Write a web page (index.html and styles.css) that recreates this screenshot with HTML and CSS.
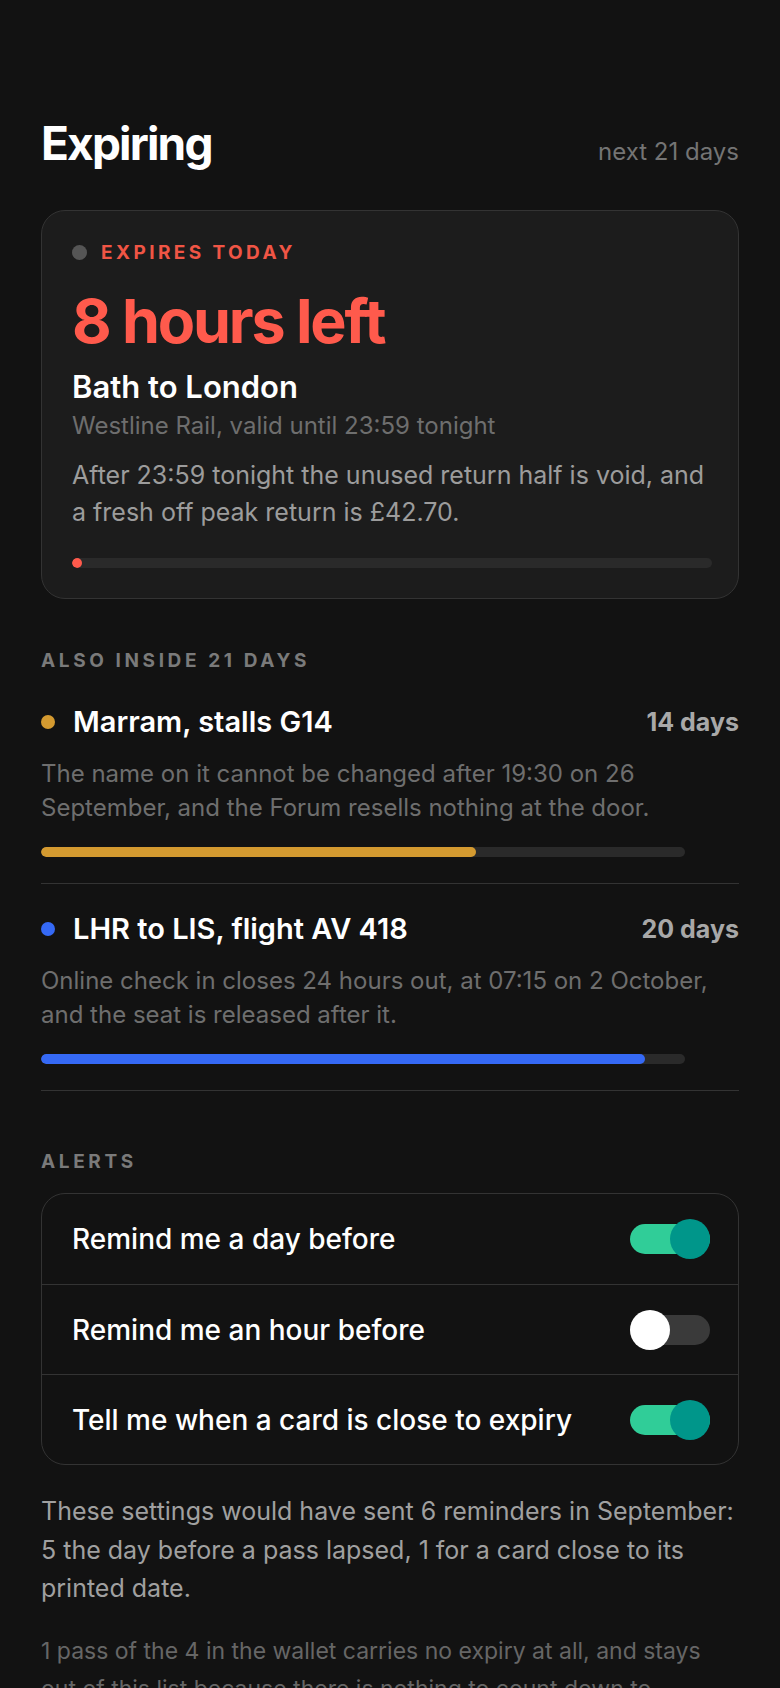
FILE: index.html
```html
<!DOCTYPE html>
<html lang="en">
<head>
<meta charset="utf-8">
<title>Expiring</title>
<link rel="stylesheet" href="styles.css">
</head>
<body>
<main class="page">
  <header class="head">
    <h1 class="title">Expiring</h1>
    <span class="range">next 21 days</span>
  </header>

  <section class="hero">
    <div class="hero-tag"><span class="tag-dot"></span><span class="tag-text">EXPIRES TODAY</span></div>
    <div class="hero-count">8 hours left</div>
    <div class="hero-name">Bath to London</div>
    <div class="hero-sub">Westline Rail, valid until 23:59 tonight</div>
    <p class="hero-body">After 23:59 tonight the unused return half is void, and a fresh off peak return is £42.70.</p>
    <div class="track hero-track"><div class="fill fill-red" style="width:1.5%"></div></div>
  </section>

  <h2 class="label">ALSO INSIDE 21 DAYS</h2>

  <div class="item">
    <div class="item-head">
      <span class="dot dot-gold"></span>
      <span class="item-name">Marram, stalls G14</span>
      <span class="item-days">14 days</span>
    </div>
    <p class="item-body">The name on it cannot be changed after 19:30 on 26 September, and the Forum resells nothing at the door.</p>
    <div class="track item-track"><div class="fill fill-gold" style="width:67.5%"></div></div>
  </div>

  <div class="item">
    <div class="item-head">
      <span class="dot dot-blue"></span>
      <span class="item-name">LHR to LIS, flight AV 418</span>
      <span class="item-days">20 days</span>
    </div>
    <p class="item-body">Online check in closes 24 hours out, at 07:15 on 2 October, and the seat is released after it.</p>
    <div class="track item-track"><div class="fill fill-blue" style="width:93.8%"></div></div>
  </div>

  <h2 class="label label-alerts">ALERTS</h2>

  <div class="alerts">
    <div class="alert-row">
      <span class="alert-text">Remind me a day before</span>
      <span class="toggle on"><span class="knob"></span></span>
    </div>
    <div class="alert-row">
      <span class="alert-text">Remind me an hour before</span>
      <span class="toggle off"><span class="knob"></span></span>
    </div>
    <div class="alert-row">
      <span class="alert-text">Tell me when a card is close to expiry</span>
      <span class="toggle on"><span class="knob"></span></span>
    </div>
  </div>

  <p class="summary">These settings would have sent 6 reminders in September: 5 the day before a pass lapsed, 1 for a card close to its printed date.</p>
  <p class="footnote">1 pass of the 4 in the wallet carries no expiry at all, and stays out of this list because there is nothing to count down to.</p>
</main>
</body>
</html>
```

FILE: styles.css
```css
* { box-sizing: border-box; }
html, body { margin: 0; padding: 0; }
body {
  background: #121212;
  color: #ffffff;
  font-family: Inter, "Noto Sans", "Liberation Sans", sans-serif;
  -webkit-font-smoothing: antialiased;
}
.page {
  padding: 117px 41px 40px;
}
.head {
  display: flex;
  justify-content: space-between;
  align-items: baseline;
  margin-bottom: 41px;
}
.title {
  margin: 0;
  font-size: 46px;
  font-weight: 700;
  letter-spacing: -0.04em;
  line-height: 52px;
}
.range {
  font-size: 24px;
  color: #747474;
}
.hero {
  background: #1c1c1c;
  border: 1.5px solid #333333;
  border-radius: 24px;
  padding: 30px 26px 30px 30px;
}
.hero-tag {
  display: flex;
  align-items: center;
  gap: 14px;
}
.tag-dot {
  width: 15px;
  height: 15px;
  border-radius: 50%;
  background: #555555;
}
.tag-text {
  color: #f05545;
  font-size: 19px;
  font-weight: 700;
  letter-spacing: 0.18em;
  line-height: 23px;
}
.hero-count {
  color: #ff5a4c;
  font-size: 61px;
  font-weight: 700;
  letter-spacing: -0.035em;
  line-height: 78px;
  margin-top: 18px;
}
.hero-name {
  font-size: 31px;
  font-weight: 600;
  line-height: 38px;
  margin-top: 8px;
}
.hero-sub {
  font-size: 24px;
  color: #6e6e6e;
  line-height: 32px;
  margin-top: 4px;
}
.hero-body {
  margin: 15px 0 0;
  font-size: 25px;
  line-height: 36.6px;
  color: #9c9c9c;
}
.track {
  height: 10px;
  border-radius: 5px;
  background: #2a2a2a;
  overflow: hidden;
}
.fill { height: 100%; border-radius: 5px; }
.fill-red { background: #ff5a4c; min-width: 10px; }
.fill-gold { background: #d49a30; }
.fill-blue { background: #3569f5; }
.hero-track { margin-top: 28px; }
.label {
  margin: 50px 0 0;
  font-size: 19px;
  font-weight: 700;
  letter-spacing: 0.19em;
  line-height: 23px;
  color: #7a7a7a;
}
.item {
  border-bottom: 1.5px solid #333333;
  padding: 31px 0 26px;
}
.item + .item { padding-top: 26px; }
.item-head {
  display: flex;
  align-items: center;
}
.dot {
  width: 14px;
  height: 14px;
  border-radius: 50%;
  margin-right: 18px;
  flex: none;
}
.dot-gold { background: #d49a30; }
.dot-blue { background: #3569f5; }
.item-name {
  font-size: 29px;
  font-weight: 600;
  line-height: 38px;
  flex: 1;
}
.item-days {
  font-size: 25px;
  font-weight: 700;
  color: #a8a8a8;
}
.item-body {
  margin: 16px 0 0;
  font-size: 24px;
  line-height: 34px;
  color: #6e6e6e;
}
.item-track {
  margin-top: 22px;
  margin-right: 54px;
}
.label-alerts { margin-top: 59px; }
.alerts {
  margin-top: 20px;
  border: 1.5px solid #333333;
  border-radius: 24px;
}
.alert-row {
  display: flex;
  align-items: center;
  justify-content: space-between;
  height: 90px;
  padding: 0 28px 0 30px;
}
.alert-row + .alert-row { border-top: 1.5px solid #333333; }
.alert-text { font-size: 28px; font-weight: 500; }
.toggle {
  position: relative;
  width: 80px;
  height: 30px;
  border-radius: 15px;
  flex: none;
}
.toggle.on { background: #30cd98; }
.toggle.off { background: #3a3a3a; }
.knob {
  position: absolute;
  top: -5px;
  width: 40px;
  height: 40px;
  border-radius: 50%;
}
.toggle.on .knob { right: 0; background: #00968a; }
.toggle.off .knob { left: 0; background: #ffffff; }
.summary {
  margin: 27px 0 0;
  font-size: 25px;
  line-height: 38.5px;
  color: #a0a0a0;
}
.footnote {
  margin: 24px 0 0;
  font-size: 23px;
  line-height: 38.5px;
  color: #666666;
}
```
